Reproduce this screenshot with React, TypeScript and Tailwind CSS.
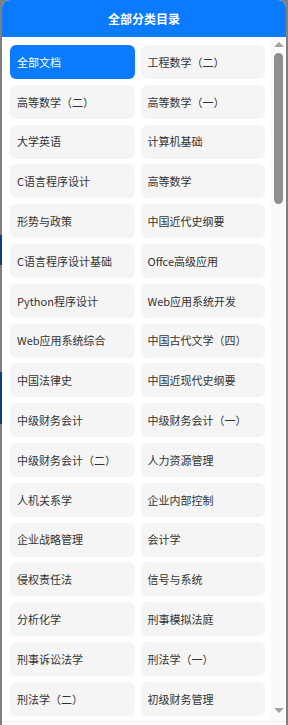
import { useState } from "react";

const categories = [
  "全部文档",
  "工程数学（二）",
  "高等数学（二）",
  "高等数学（一）",
  "大学英语",
  "计算机基础",
  "C语言程序设计",
  "高等数学",
  "形势与政策",
  "中国近代史纲要",
  "C语言程序设计基础",
  "Offce高级应用",
  "Python程序设计",
  "Web应用系统开发",
  "Web应用系统综合",
  "中国古代文学（四）",
  "中国法律史",
  "中国近现代史纲要",
  "中级财务会计",
  "中级财务会计（一）",
  "中级财务会计（二）",
  "人力资源管理",
  "人机关系学",
  "企业内部控制",
  "企业战略管理",
  "会计学",
  "侵权责任法",
  "信号与系统",
  "分析化学",
  "刑事模拟法庭",
  "刑事诉讼法学",
  "刑法学（一）",
  "刑法学（二）",
  "初级财务管理",
];

export default function App() {
  const [active, setActive] = useState(0);

  return (
    <div
      className="relative w-[288px] h-[725px] bg-[#7f7f7f] overflow-hidden"
      style={{ fontFamily: '"Noto Sans CJK SC", "Liberation Sans", sans-serif' }}
    >
      {/* page behind the overlay */}
      <div className="flex flex-col">
        <div className="h-[235px]" />
        <div className="h-[30px] w-[2px] bg-[#0d3f80]" />
        <div className="h-[107px]" />
        <div className="h-[52px] w-[2px] bg-[#0d3f80]" />
      </div>

      <div className="absolute left-[2px] top-0 w-[284px] h-[760px] bg-white rounded-t-[8px] flex flex-col overflow-hidden">
        <div className="h-[37px] shrink-0 bg-[#0a7bff] flex items-center justify-center text-white text-[12px] font-bold">
          全部分类目录
        </div>
        <div className="h-[685px] shrink-0 flex border-b border-[#eeeeee]">
          <div className="flex-1 overflow-hidden pl-2 pr-[6px] pt-2">
            <div className="grid grid-cols-2 gap-x-[6px] gap-y-[5.8px]">
              {categories.map((c, i) => (
                <button
                  key={c}
                  onClick={() => setActive(i)}
                  className={
                    i === active
                      ? "h-[34px] rounded-[6px] bg-[#0a7bff] text-white text-[11px] text-left pl-[7px] truncate"
                      : "h-[34px] rounded-[6px] bg-[#f5f5f5] text-[#333333] text-[11px] text-left pl-[7px] truncate"
                  }
                >
                  {c}
                </button>
              ))}
            </div>
          </div>
          {/* scrollbar */}
          <div className="w-[15px] shrink-0 bg-[#fafafa] flex flex-col items-center">
            <div className="mt-[5px] w-0 h-0 border-l-[5px] border-r-[5px] border-b-[5px] border-l-transparent border-r-transparent border-b-[#a3a3a3]" />
            <div className="mt-[6px] w-[9px] h-[151px] rounded-full bg-[#8f8f8f]" />
            <div className="flex-1" />
            <div className="mb-[8px] w-0 h-0 border-l-[5px] border-r-[5px] border-t-[5px] border-l-transparent border-r-transparent border-t-[#a3a3a3]" />
          </div>
        </div>
      </div>
    </div>
  );
}
